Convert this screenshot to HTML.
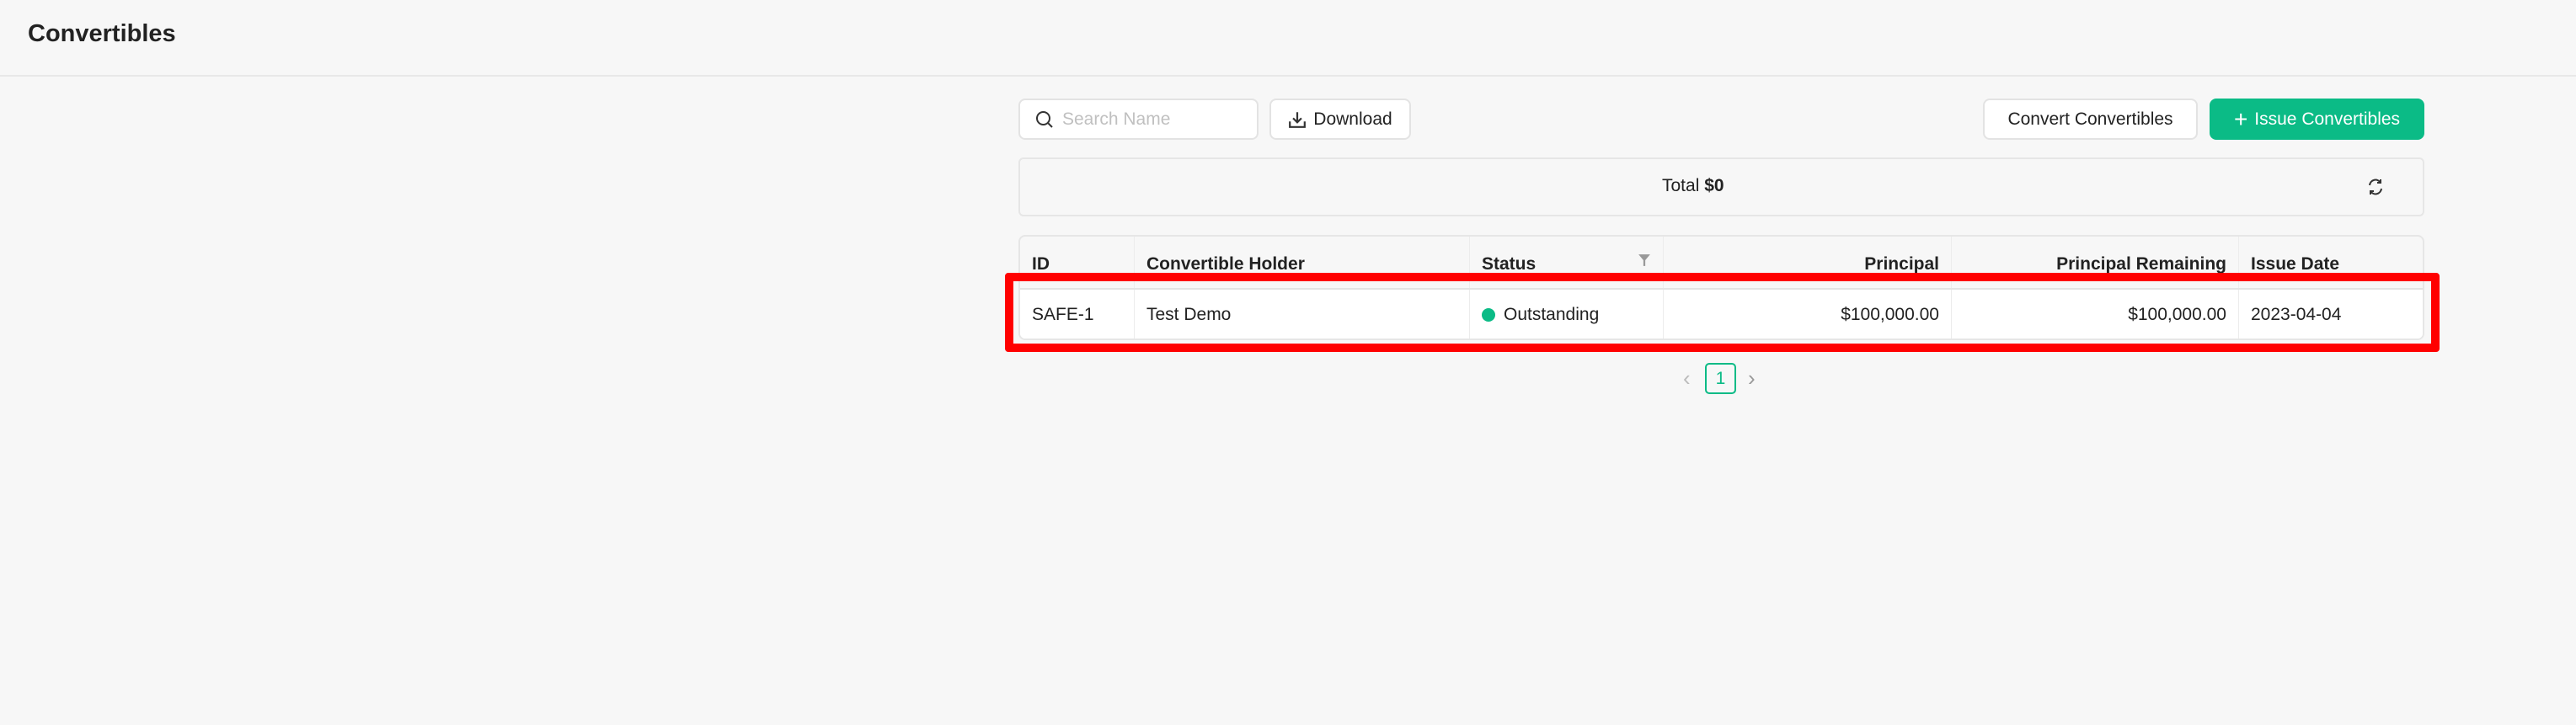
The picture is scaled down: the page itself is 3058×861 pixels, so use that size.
<!DOCTYPE html>
<html><head><style>
*{box-sizing:border-box;margin:0;padding:0}
body{width:3058px;height:861px;background:#f7f7f7;font-family:"Liberation Sans",sans-serif;color:#222;position:relative;overflow:hidden}
.a{position:absolute}
.hdr{left:0;top:0;width:3058px;height:91px;border-bottom:2px solid #e8e8e8}
.title{left:33px;top:24px;font-size:29px;font-weight:bold;color:#222}
.btn{background:#fff;border:2px solid #e3e3e3;border-radius:8px;display:flex;align-items:center;justify-content:center;font-size:21px;color:#222;white-space:nowrap}
.cell{position:absolute;display:flex;align-items:center;font-size:21px;padding:0 14px;border-right:1px solid #ececec;white-space:nowrap}
.h{font-weight:bold;height:61px;top:0;padding-top:4px}
.d{top:63px;height:60px}
.r{justify-content:flex-end}
</style></head><body>
<div class="a hdr"></div>
<div class="a title">Convertibles</div>

<div class="a btn" style="left:1209px;top:117px;width:285px;height:49px;justify-content:flex-start;padding-left:18px;color:#c0c0c0">
<svg width="22" height="22" viewBox="0 0 22 22" style="margin-right:10px"><circle cx="9.5" cy="9.5" r="7.5" fill="none" stroke="#333" stroke-width="2"/><path d="M15 15l5 5" stroke="#333" stroke-width="2"/></svg>Search Name</div>
<div class="a btn" style="left:1507px;top:117px;width:168px;height:49px">
<svg width="22" height="22" viewBox="0 0 20 20" style="margin-right:8px"><path d="M10 2v11M5.5 8.5L10 13l4.5-4.5M2 12v6h16v-6" fill="none" stroke="#333" stroke-width="2"/></svg>Download</div>

<div class="a btn" style="left:2354px;top:117px;width:255px;height:49px">Convert Convertibles</div>
<div class="a btn" style="left:2623px;top:117px;width:255px;height:49px;background:#0bbb86;border-color:#0bbb86;color:#fff">
<span style="font-size:28px;margin-right:8px;font-weight:300">+</span>Issue Convertibles</div>

<div class="a" style="left:1209px;top:187px;width:1669px;height:70px;border:2px solid #e6e6e6;border-radius:6px;background:#f7f7f7"></div>
<div class="a" style="left:1973px;top:209px;font-size:21px">Total <b>$0</b></div>
<svg class="a" style="left:2808px;top:210px" width="24" height="24" viewBox="0 0 24 24"><path d="M5 10a7 7 0 0 1 13-3M19 14a7 7 0 0 1-13 3" fill="none" stroke="#333" stroke-width="2"/><path d="M18 3v4h-4M6 21v-4h4" fill="none" stroke="#333" stroke-width="2"/></svg>

<div class="a" style="left:1209px;top:279px;width:1669px;height:125px;border:2px solid #e6e6e6;border-radius:8px;background:#f7f7f7;overflow:hidden">
<div class="a" style="left:0;top:61px;width:1669px;height:62px;background:#fff;border-top:2px solid #e3e3e3"></div>
<div class="cell h" style="left:0;width:136px">ID</div>
<div class="cell h" style="left:136px;width:398px">Convertible Holder</div>
<div class="cell h" style="left:534px;width:230px">Status
<svg style="position:absolute;right:14px;top:20px" width="16" height="16" viewBox="0 0 14 14"><path d="M1 1h12L8 7v6H6V7z" fill="#999"/></svg></div>
<div class="cell h r" style="left:764px;width:342px">Principal</div>
<div class="cell h r" style="left:1106px;width:341px">Principal Remaining</div>
<div class="cell h" style="left:1447px;width:222px;border:none">Issue Date</div>
<div class="cell d" style="left:0;width:136px">SAFE-1</div>
<div class="cell d" style="left:136px;width:398px">Test Demo</div>
<div class="cell d" style="left:534px;width:230px"><span style="width:16px;height:16px;border-radius:50%;background:#0bbb86;margin-right:10px;display:inline-block"></span>Outstanding</div>
<div class="cell d r" style="left:764px;width:342px">$100,000.00</div>
<div class="cell d r" style="left:1106px;width:341px">$100,000.00</div>
<div class="cell d" style="left:1447px;width:222px;border:none">2023-04-04</div>
</div>

<div class="a" style="left:1193px;top:324px;width:1703px;height:94px;border:10px solid #f00;border-radius:4px"></div>

<div class="a" style="left:1998px;top:434px;color:#bbb;font-size:26px">‹</div>
<div class="a" style="left:2024px;top:431px;width:37px;height:37px;border:2px solid #0bbb86;border-radius:5px;color:#0bbb86;font-size:21px;display:flex;align-items:center;justify-content:center">1</div>
<div class="a" style="left:2075px;top:434px;color:#999;font-size:26px">›</div>
</body></html>
